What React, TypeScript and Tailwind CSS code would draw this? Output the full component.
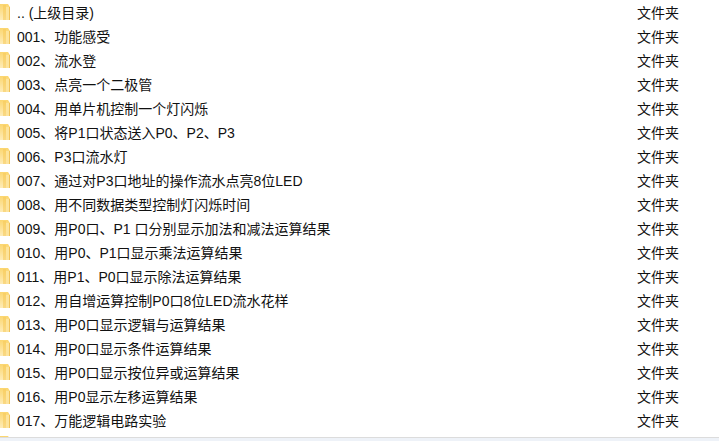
const rows = [
  '.. (上级目录)',
  '001、功能感受',
  '002、流水登',
  '003、点亮一个二极管',
  '004、用单片机控制一个灯闪烁',
  '005、将P1口状态送入P0、P2、P3',
  '006、P3口流水灯',
  '007、通过对P3口地址的操作流水点亮8位LED',
  '008、用不同数据类型控制灯闪烁时间',
  '009、用P0口、P1 口分别显示加法和减法运算结果',
  '010、用P0、P1口显示乘法运算结果',
  '011、用P1、P0口显示除法运算结果',
  '012、用自增运算控制P0口8位LED流水花样',
  '013、用P0口显示逻辑与运算结果',
  '014、用P0口显示条件运算结果',
  '015、用P0口显示按位异或运算结果',
  '016、用P0显示左移运算结果',
  '017、万能逻辑电路实验',
];

const FolderIcon = () => (
  <svg width="16" height="16" viewBox="0 0 16 16" className="ml-[-6px] mt-[-2px] shrink-0">
    <defs>
      <linearGradient id="folderFront" x1="0" y1="0" x2="0" y2="1">
        <stop offset="0" stopColor="#fbd66f" />
        <stop offset="1" stopColor="#feecb8" />
      </linearGradient>
    </defs>
    <path d="M0 0h14l2 3v13H0z" fill="url(#folderFront)" />
    <path d="M9 1h3v15H9z" fill="#f6c959" opacity="0.55" />
    <path d="M12 3h4v13h-4z" fill="#fde49c" />
    <path d="M15 3h1v13h-1z" fill="#f0c25a" />
  </svg>
);

export default function App() {
  return (
    <div className="w-[719px] h-[441px] overflow-hidden bg-white flex flex-col font-['Liberation_Sans','Noto_Sans_CJK_SC',sans-serif] text-[14px] text-[#111111]">
      <div className="h-[437px] shrink-0 overflow-hidden pt-px">
        {rows.map((name) => (
          <div key={name} className="h-6 flex items-center">
            <FolderIcon />
            <span className="ml-[7px] w-[620px] whitespace-pre">{name}</span>
            <span>文件夹</span>
          </div>
        ))}
        <div className="h-6 flex items-center">
          <FolderIcon />
        </div>
      </div>
      <div className="flex-1 bg-[#eef2f8] border-t border-[#dcdcdc]" />
    </div>
  );
}
